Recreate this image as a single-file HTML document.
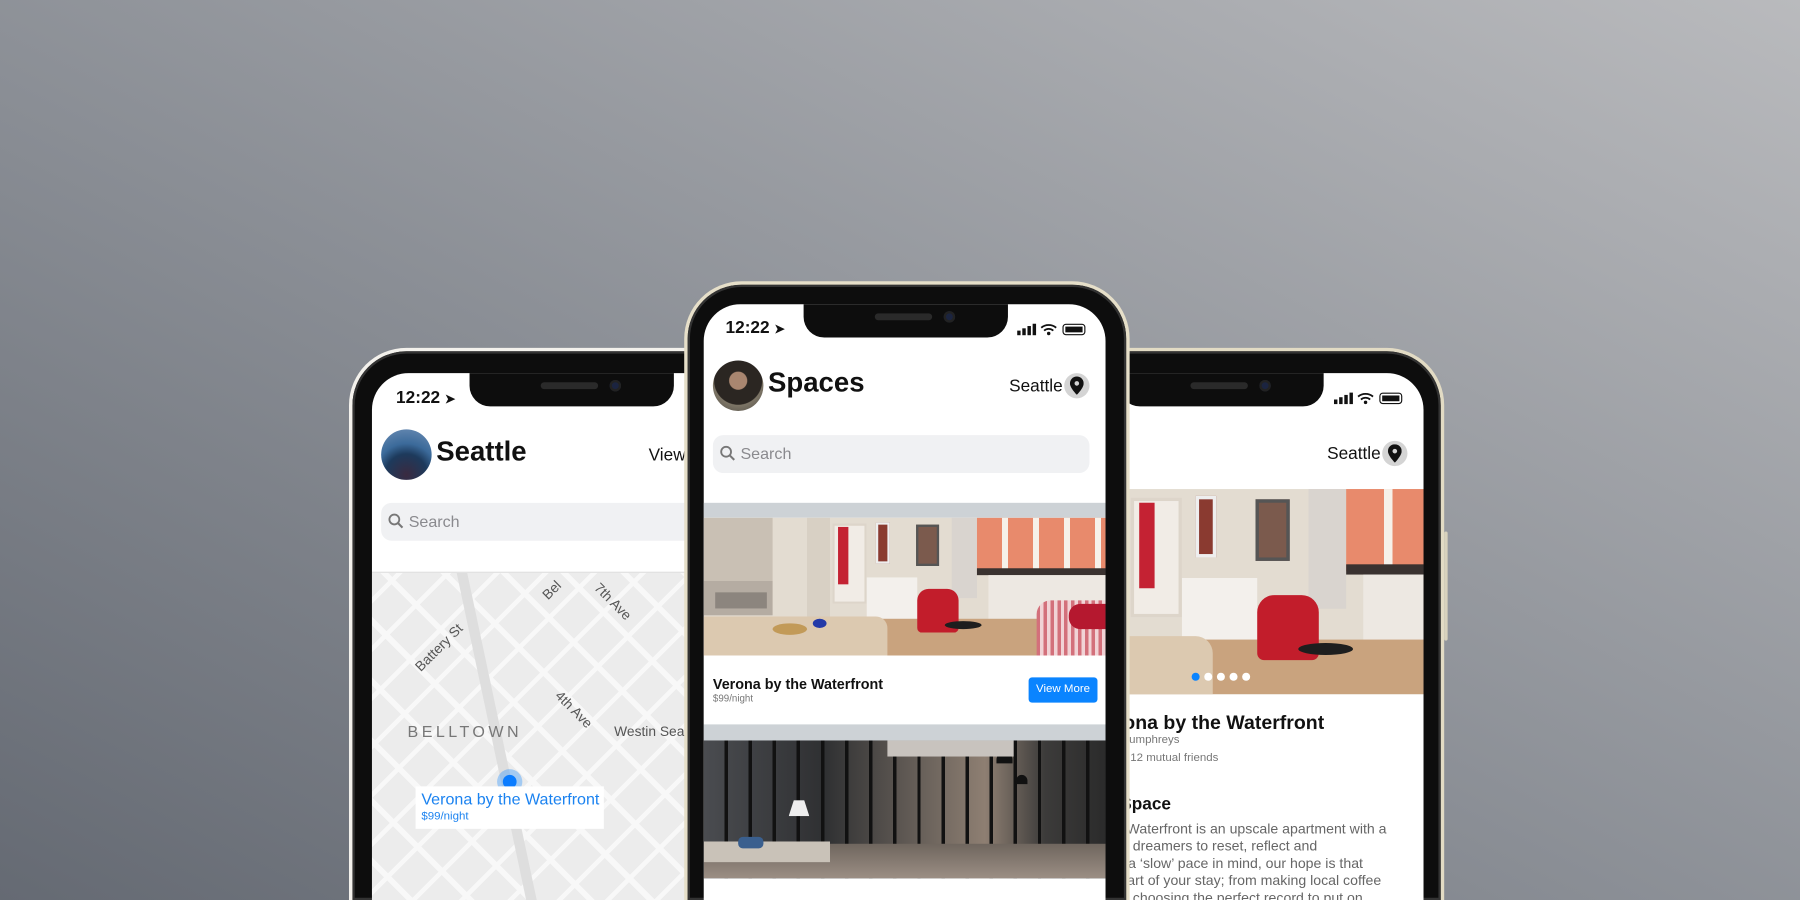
<!DOCTYPE html>
<html><head><meta charset="utf-8"><style>
*{margin:0;padding:0;box-sizing:border-box}
html,body{width:1800px;height:900px;overflow:hidden}
body{background:linear-gradient(to top right,#656a73 0%,#8a8e95 45%,#b9babd 100%);font-family:"Liberation Sans",sans-serif}
#w{position:absolute;left:0;top:0;width:1568px;height:784px;transform:scale(1.148);transform-origin:0 0;overflow:hidden}
.ph{position:absolute;width:388px;height:481px;border-radius:50px 50px 0 0;padding:3px}
.ph .bz{position:absolute;inset:3px 3px 0 3px;border-radius:47px 47px 0 0;background:#0d0d0d;box-shadow:inset 0 0 0 2px #333}
.sc{position:absolute;left:18px;right:18px;top:20px;bottom:0;background:#fff;border-radius:32px 32px 0 0;overflow:hidden}
.notch{position:absolute;top:-2px;width:178px;height:29px;background:#0d0d0d;border-radius:0 0 18px 18px;left:50%;margin-left:-89px}
.notch:before{content:"";position:absolute;left:62px;top:8px;width:50px;height:6px;border-radius:3px;background:#2a2a2a}
.notch:after{content:"";position:absolute;left:122px;top:6px;width:10px;height:10px;border-radius:50%;background:#1b2440;box-shadow:inset 0 0 0 2px #222}
.ab{position:absolute;white-space:nowrap}
.time{font-size:15px;font-weight:bold;color:#111}
.srch{position:absolute;background:#f0f1f3;border-radius:9px;height:33px;color:#8a8a8e;font-size:14px;line-height:33px;padding-left:24px}
.room{position:absolute;width:350px;height:120px;background:#e3dcd1;overflow:hidden}
.room div{position:absolute}
</style></head><body><div id="w">

<!-- LEFT PHONE -->
<div class="ph" style="left:304px;top:303px;background:#f3f1ec;z-index:1">
<div class="bz"></div>
<div class="sc" style="left:20px;top:22px">
 <div class="ab time" style="left:21px;top:13px">12:22 <span style="font-size:11px">➤</span></div>
 <div class="ab" style="left:8px;top:49px;width:44px;height:44px;border-radius:50%;background:radial-gradient(circle at 50% 90%,#3a2a40 0,#1d3a5c 40%,#3b6a9a 60%,#6f8fb6 100%)"></div>
 <div class="ab" style="left:56px;top:55px;font-size:24px;font-weight:bold;color:#111">Seattle</div>
 <div class="ab" style="left:241px;top:63px;font-size:15px;color:#111">View</div>
 <div class="srch" style="left:8px;top:113px;width:300px">Search</div>
 <svg class="ab" style="left:14px;top:122px" width="14" height="14"><circle cx="5.5" cy="5.5" r="4.3" fill="none" stroke="#777" stroke-width="1.6"/><path d="M8.6 8.6l4 4" stroke="#777" stroke-width="1.8"/></svg>
 <div class="ab" style="left:0;top:173px;width:400px;height:1px;background:#ddd"></div>
 <div class="ab" style="left:0;top:174px;width:400px;height:300px;background:#ececec;overflow:hidden">
  <div class="ab" style="inset:0;background:repeating-linear-gradient(45deg,transparent 0 32px,#f8f8f8 32px 37px),repeating-linear-gradient(-45deg,transparent 0 26px,#f8f8f8 26px 30px)"></div>
  <div class="ab" style="left:110px;top:-40px;width:9px;height:420px;background:#dedede;transform:rotate(-12deg)"></div>
  <div class="ab" style="left:32px;top:58px;font-size:12px;color:#555;transform:rotate(-45deg)">Battery St</div>
  <div class="ab" style="left:148px;top:8px;font-size:12px;color:#555;transform:rotate(-45deg)">Bel</div>
  <div class="ab" style="left:190px;top:18px;font-size:12px;color:#555;transform:rotate(45deg)">7th Ave</div>
  <div class="ab" style="left:156px;top:112px;font-size:12px;color:#555;transform:rotate(45deg)">4th Ave</div>
  <div class="ab" style="left:211px;top:131px;font-size:12px;color:#555">Westin Sea</div>
  <div class="ab" style="left:31px;top:130px;font-size:14px;color:#777;letter-spacing:3px">BELLTOWN</div>
  <div class="ab" style="left:109px;top:171px;width:22px;height:22px;border-radius:50%;background:rgba(30,140,255,.35)"></div>
  <div class="ab" style="left:114px;top:176px;width:12px;height:12px;border-radius:50%;background:#0a7cff"></div>
  <div class="ab" style="left:38px;top:186px;width:164px;height:37px;background:#fff"></div>
  <div class="ab" style="left:43px;top:189px;font-size:14px;color:#1a82f0">Verona by the Waterfront</div>
  <div class="ab" style="left:43px;top:207px;font-size:10px;color:#1a82f0">$99/night</div>
 </div>
</div>
<div class="notch" style="top:22px"></div>
</div>

<!-- RIGHT PHONE -->
<div class="ph" style="left:870px;top:303px;background:#e2dbc4;z-index:1">
<div class="bz"></div>
<div class="ab" style="left:388px;top:160px;width:3px;height:95px;background:#d8d2bd;border-radius:2px"></div>
<div class="sc" style="left:18px;top:22px">
 <svg class="ab" style="left:274px;top:16px" width="62" height="12"><rect x="0" y="7" width="3" height="4" fill="#111"/><rect x="4.5" y="5" width="3" height="6" fill="#111"/><rect x="9" y="3" width="3" height="8" fill="#111"/><rect x="13.5" y="1" width="3" height="10" fill="#111"/><path d="M21 4.5a10 10 0 0 1 13 0M23.5 7a6 6 0 0 1 8 0" fill="none" stroke="#111" stroke-width="1.6"/><circle cx="27.5" cy="9.5" r="1.5" fill="#111"/><rect x="40" y="1.5" width="19" height="9" rx="2.5" fill="none" stroke="#111"/><rect x="42" y="3.5" width="15" height="5" fill="#111"/></svg>
 <div class="ab" style="left:268px;top:62px;font-size:15px;color:#111">Seattle</div>
 <div class="ab" style="left:316px;top:59px;width:22px;height:22px;border-radius:50%;background:#d4d4d4"></div>
 <svg class="ab" style="left:321px;top:62px" width="12" height="16"><path d="M6 0a6 6 0 0 0-6 6c0 4 6 10 6 10s6-6 6-10a6 6 0 0 0-6-6z" fill="#111"/><circle cx="6" cy="6" r="2" fill="#d4d4d4"/></svg>
 <div class="ab" style="left:-70px;top:101px;width:422px;height:179px;overflow:hidden">
  <div class="room" style="left:0;top:0;transform:scale(1.49);transform-origin:0 0" id="r2"></div>
 </div>
 <div class="ab" style="left:150px;top:261px;width:7px;height:7px;border-radius:50%;background:#0a84ff"></div>
 <div class="ab" style="left:161px;top:261px;width:7px;height:7px;border-radius:50%;background:#fff"></div>
 <div class="ab" style="left:172px;top:261px;width:7px;height:7px;border-radius:50%;background:#fff"></div>
 <div class="ab" style="left:183px;top:261px;width:7px;height:7px;border-radius:50%;background:#fff"></div>
 <div class="ab" style="left:194px;top:261px;width:7px;height:7px;border-radius:50%;background:#fff"></div>
 <div class="ab" style="left:64px;top:295px;font-size:17px;font-weight:bold;color:#111">Verona by the Waterfront</div>
 <div class="ab" style="left:65px;top:314px;font-size:10px;color:#777">Sam Humphreys</div>
 <div class="ab" style="left:76px;top:330px;font-size:10px;color:#777">with 12 mutual friends</div>
 <div class="ab" style="left:57px;top:367px;font-size:15px;font-weight:bold;color:#111">The Space</div>
 <div class="ab" style="left:14px;top:390px;font-size:12.3px;line-height:15px;color:#666">Verona by the Waterfront is an upscale apartment with a<br>and a place for dreamers to reset, reflect and<br>Designed with a ‘slow’ pace in mind, our hope is that<br>is an integral part of your stay; from making local coffee<br>in the morning, choosing the perfect record to put on</div>
</div>
<div class="notch" style="top:22px"></div>
</div>

<!-- CENTER PHONE -->
<div class="ph" style="left:596px;top:245px;background:#e6dfc9;z-index:3;height:539px">
<div class="bz"></div>
<div class="sc" style="left:17px;right:21px">
 <div class="ab time" style="left:19px;top:12px">12:22 <span style="font-size:11px">➤</span></div>
 <svg class="ab" style="left:273px;top:16px" width="62" height="12"><rect x="0" y="7" width="3" height="4" fill="#111"/><rect x="4.5" y="5" width="3" height="6" fill="#111"/><rect x="9" y="3" width="3" height="8" fill="#111"/><rect x="13.5" y="1" width="3" height="10" fill="#111"/><path d="M21 4.5a10 10 0 0 1 13 0M23.5 7a6 6 0 0 1 8 0" fill="none" stroke="#111" stroke-width="1.6"/><circle cx="27.5" cy="9.5" r="1.5" fill="#111"/><rect x="40" y="1.5" width="19" height="9" rx="2.5" fill="none" stroke="#111"/><rect x="42" y="3.5" width="15" height="5" fill="#111"/></svg>
 <div class="ab" style="left:8px;top:49px;width:44px;height:44px;border-radius:50%;background:radial-gradient(circle at 50% 40%,#a98670 0 22%,#2b2622 24% 60%,#7d7566 62%,#4d4a44 100%)"></div>
 <div class="ab" style="left:56px;top:55px;font-size:24px;font-weight:bold;color:#111">Spaces</div>
 <div class="ab" style="left:266px;top:63px;font-size:15px;color:#111">Seattle</div>
 <div class="ab" style="left:314px;top:60px;width:22px;height:22px;border-radius:50%;background:#d4d4d4"></div>
 <svg class="ab" style="left:319px;top:63px" width="12" height="16"><path d="M6 0a6 6 0 0 0-6 6c0 4 6 10 6 10s6-6 6-10a6 6 0 0 0-6-6z" fill="#111"/><circle cx="6" cy="6" r="2" fill="#d4d4d4"/></svg>
 <div class="srch" style="left:8px;top:114px;width:328px">Search</div>
 <svg class="ab" style="left:14px;top:123px" width="14" height="14"><circle cx="5.5" cy="5.5" r="4.3" fill="none" stroke="#777" stroke-width="1.6"/><path d="M8.6 8.6l4 4" stroke="#777" stroke-width="1.8"/></svg>
 <div class="ab" style="left:0;top:173px;width:350px;height:13px;background:#cdd2d6"></div>
 <div class="room" style="left:0;top:186px" id="r1">
  <div style="left:0;top:0;width:60px;height:55px;background:#c9c0b4"></div>
  <div style="left:0;top:55px;width:60px;height:30px;background:#b5aca2"></div>
  <div style="left:10px;top:65px;width:45px;height:14px;background:#8c857e"></div>
  <div style="left:90px;top:0;width:20px;height:120px;background:#d8d0c4"></div>
  <div style="left:112px;top:5px;width:30px;height:70px;background:#f1ece6;border:2px solid #ddd5ca"></div>
  <div style="left:117px;top:8px;width:9px;height:50px;background:#c42233"></div>
  <div style="left:150px;top:4px;width:12px;height:36px;background:#8a3a30;border:2px solid #eee"></div>
  <div style="left:185px;top:6px;width:20px;height:36px;background:#7b5a4d;border:2px solid #555"></div>
  <div style="left:142px;top:52px;width:44px;height:45px;background:#f3f0ec"></div>
  <div style="left:216px;top:0;width:22px;height:70px;background:#d9d4cf"></div>
  <div style="left:238px;top:0;width:112px;height:48px;background:#e88a6c"></div>
  <div style="left:238px;top:0;width:112px;height:48px;background:repeating-linear-gradient(90deg,transparent 0 22px,#f6f1ea 22px 27px)"></div>
  <div style="left:238px;top:44px;width:112px;height:6px;background:#3a3230"></div>
  <div style="left:248px;top:50px;width:102px;height:40px;background:#ede8e2"></div>
  <div style="left:0;top:88px;width:350px;height:32px;background:#c9a37e"></div>
  <div style="left:0;top:86px;width:160px;height:34px;background:#dcc9b0;border-radius:0 10px 0 0"></div>
  <div style="left:186px;top:62px;width:36px;height:38px;background:#c21d2b;border-radius:10px 10px 4px 4px"></div>
  <div style="left:210px;top:90px;width:32px;height:7px;background:#1e1e1e;border-radius:50%"></div>
  <div style="left:290px;top:72px;width:60px;height:48px;background:repeating-linear-gradient(90deg,#d3707b 0 3px,#f1d3d6 3px 6px);border-radius:12px 0 0 0"></div>
  <div style="left:318px;top:75px;width:32px;height:22px;background:#b5182f;border-radius:10px 0 0 10px"></div>
  <div style="left:95px;top:88px;width:12px;height:8px;background:#243aa8;border-radius:50%"></div>
  <div style="left:60px;top:92px;width:30px;height:10px;background:#c29a58;border-radius:50%"></div>
 </div>
 <div class="ab" style="left:0;top:306px;width:350px;height:60px;background:#fff">
  <div class="ab" style="left:8px;top:18px;font-size:12.5px;font-weight:bold;color:#111">Verona by the Waterfront</div>
  <div class="ab" style="left:8px;top:32px;font-size:8.5px;color:#777">$99/night</div>
  <div class="ab" style="left:283px;top:19px;width:60px;height:22px;border-radius:3px;background:#0a84ff;color:#fff;font-size:10px;line-height:22px;text-align:center">View More</div>
 </div>
 <div class="ab" style="left:0;top:366px;width:350px;height:14px;background:#cdd2d6"></div>
 <div class="ab" style="left:0;top:380px;width:350px;height:120px;background:#3b3a3a;overflow:hidden">
  <div class="ab" style="left:0;top:0;width:350px;height:120px;background:linear-gradient(90deg,#4a4c50 0,#2f3032 30%,#6a625b 55%,#8e7f72 70%,#3c3b3a 85%,#2b2b2b 100%)"></div>
  <div class="ab" style="left:0;top:0;width:350px;height:120px;background:repeating-linear-gradient(90deg,transparent 0 18px,#111 18px 21px)"></div>
  <div class="ab" style="left:0;top:90px;width:350px;height:30px;background:linear-gradient(#6f665e,#9b8e84)"></div>
  <div class="ab" style="left:0;top:88px;width:110px;height:18px;background:#c9c2b8"></div>
  <div class="ab" style="left:30px;top:84px;width:22px;height:10px;background:#3a5f8e;border-radius:4px"></div>
  <div class="ab" style="left:74px;top:52px;width:18px;height:14px;background:#eee;clip-path:polygon(25% 0,75% 0,100% 100%,0 100%)"></div>
  <div class="ab" style="left:255px;top:10px;width:14px;height:10px;background:#111;border-radius:7px 7px 0 0"></div>
  <div class="ab" style="left:272px;top:30px;width:10px;height:8px;background:#111;border-radius:5px 5px 0 0"></div>
  <div class="ab" style="left:160px;top:0;width:110px;height:14px;background:#c8c3be"></div>
 </div>
</div>
<div class="notch" style="left:193px;top:20px"></div>
</div>

</div>
<script>
document.getElementById('r2').innerHTML=document.getElementById('r1').innerHTML;
</script>
</body></html>
